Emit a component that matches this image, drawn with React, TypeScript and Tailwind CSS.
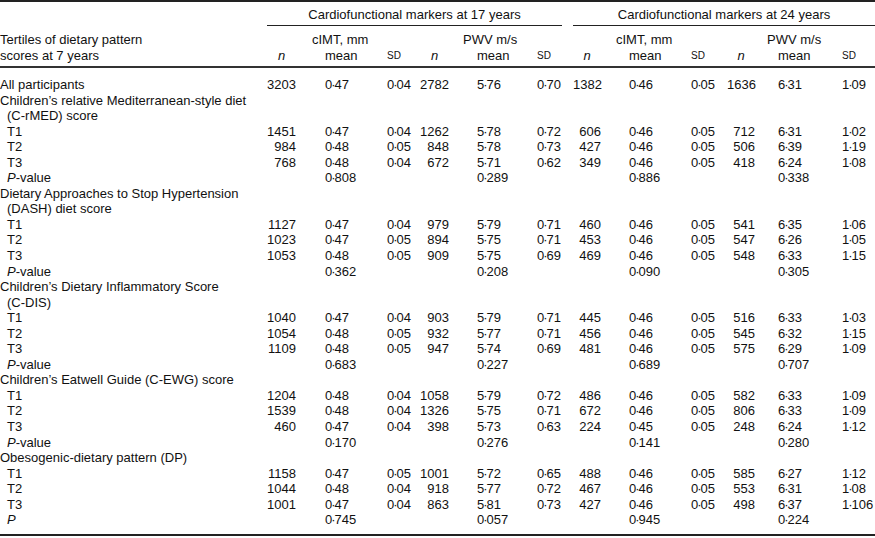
import React from "react";

type Row =
  | { kind: "head"; label: string; indent?: boolean }
  | { kind: "data"; label: string; indent?: boolean; v: string[] }
  | { kind: "p"; label: "P-value" | "P"; v: string[] };

const rows: Row[] = [
  { kind: "data", label: "All participants", v: ["3203", "0·47", "0·04", "2782", "5·76", "0·70", "1382", "0·46", "0·05", "1636", "6·31", "1·09"] },
  { kind: "head", label: "Children’s relative Mediterranean-style diet" },
  { kind: "head", label: "(C-rMED) score", indent: true },
  { kind: "data", label: "T1", indent: true, v: ["1451", "0·47", "0·04", "1262", "5·78", "0·72", "606", "0·46", "0·05", "712", "6·31", "1·02"] },
  { kind: "data", label: "T2", indent: true, v: ["984", "0·48", "0·05", "848", "5·78", "0·73", "427", "0·46", "0·05", "506", "6·39", "1·19"] },
  { kind: "data", label: "T3", indent: true, v: ["768", "0·48", "0·04", "672", "5·71", "0·62", "349", "0·46", "0·05", "418", "6·24", "1·08"] },
  { kind: "p", label: "P-value", v: ["0·808", "0·289", "0·886", "0·338"] },
  { kind: "head", label: "Dietary Approaches to Stop Hypertension" },
  { kind: "head", label: "(DASH) diet score", indent: true },
  { kind: "data", label: "T1", indent: true, v: ["1127", "0·47", "0·04", "979", "5·79", "0·71", "460", "0·46", "0·05", "541", "6·35", "1·06"] },
  { kind: "data", label: "T2", indent: true, v: ["1023", "0·47", "0·05", "894", "5·75", "0·71", "453", "0·46", "0·05", "547", "6·26", "1·05"] },
  { kind: "data", label: "T3", indent: true, v: ["1053", "0·48", "0·05", "909", "5·75", "0·69", "469", "0·46", "0·05", "548", "6·33", "1·15"] },
  { kind: "p", label: "P-value", v: ["0·362", "0·208", "0·090", "0·305"] },
  { kind: "head", label: "Children’s Dietary Inflammatory Score" },
  { kind: "head", label: "(C-DIS)", indent: true },
  { kind: "data", label: "T1", indent: true, v: ["1040", "0·47", "0·04", "903", "5·79", "0·71", "445", "0·46", "0·05", "516", "6·33", "1·03"] },
  { kind: "data", label: "T2", indent: true, v: ["1054", "0·48", "0·05", "932", "5·77", "0·71", "456", "0·46", "0·05", "545", "6·32", "1·15"] },
  { kind: "data", label: "T3", indent: true, v: ["1109", "0·48", "0·05", "947", "5·74", "0·69", "481", "0·46", "0·05", "575", "6·29", "1·09"] },
  { kind: "p", label: "P-value", v: ["0·683", "0·227", "0·689", "0·707"] },
  { kind: "head", label: "Children’s Eatwell Guide (C-EWG) score" },
  { kind: "data", label: "T1", indent: true, v: ["1204", "0·48", "0·04", "1058", "5·79", "0·72", "486", "0·46", "0·05", "582", "6·33", "1·09"] },
  { kind: "data", label: "T2", indent: true, v: ["1539", "0·48", "0·04", "1326", "5·75", "0·71", "672", "0·46", "0·05", "806", "6·33", "1·09"] },
  { kind: "data", label: "T3", indent: true, v: ["460", "0·47", "0·04", "398", "5·73", "0·63", "224", "0·45", "0·05", "248", "6·24", "1·12"] },
  { kind: "p", label: "P-value", v: ["0·170", "0·276", "0·141", "0·280"] },
  { kind: "head", label: "Obesogenic-dietary pattern (DP)" },
  { kind: "data", label: "T1", indent: true, v: ["1158", "0·47", "0·05", "1001", "5·72", "0·65", "488", "0·46", "0·05", "585", "6·27", "1·12"] },
  { kind: "data", label: "T2", indent: true, v: ["1044", "0·48", "0·04", "918", "5·77", "0·72", "467", "0·46", "0·05", "553", "6·31", "1·08"] },
  { kind: "data", label: "T3", indent: true, v: ["1001", "0·47", "0·04", "863", "5·81", "0·73", "427", "0·46", "0·05", "498", "6·37", "1·106"] },
  { kind: "p", label: "P", v: ["0·745", "0·057", "0·945", "0·224"] },
];

// n right-aligned, mean/SD left-aligned
const colCls = [
  "text-right",
  "pl-[29px]",
  "",
  "text-right",
  "pl-[28px]",
  "",
  "text-right",
  "pl-[28px]",
  "",
  "text-right",
  "pl-[23px]",
  "",
];

const grid =
  "grid grid-cols-[267px_29px_91px_33px_29px_88px_36px_28px_90px_36px_28px_87px_33px]";

// the decimal point is a tight middle dot
function Num({ s }: { s: string }) {
  const [a, b] = s.split("·");
  if (b === undefined) return <>{s}</>;
  return (
    <>
      {a}
      <span className="mx-[-1px]">·</span>
      {b}
    </>
  );
}

function Label({ row }: { row: Row }) {
  if (row.kind === "p") {
    return (
      <div className="pl-[7px] whitespace-nowrap">
        <i>P</i>
        {row.label === "P-value" ? "-value" : ""}
      </div>
    );
  }
  return (
    <div className={`whitespace-nowrap ${row.indent ? "pl-[7px]" : ""}`}>{row.label}</div>
  );
}

function SubHead({ first }: { first: boolean }) {
  return (
    <>
      <div className="text-center italic">n</div>
      <div className={first ? "pl-[29px]" : "pl-[28px]"}>mean</div>
      <div className="text-[10px]">SD</div>
      <div className="text-center italic">n</div>
      <div className={first ? "pl-[28px]" : "pl-[23px]"}>mean</div>
      <div className="text-[10px]">SD</div>
    </>
  );
}

export default function App() {
  return (
    <div
      className="w-[875px] h-[538px] bg-white text-[#111] text-[13px]"
      style={{ fontFamily: '"Liberation Sans", Arial, sans-serif' }}
    >
      <div className="border-t-2 border-[#222]">
        {/* Group headers */}
        <div className={`${grid} h-[24px]`}>
          <div />
          <div className="col-span-6 mr-[11px] border-b border-[#222] pt-[3px] leading-[20px] text-center whitespace-nowrap">
            Cardiofunctional markers at 17 years
          </div>
          <div className="col-span-6 border-b border-[#222] pt-[3px] leading-[20px] text-center whitespace-nowrap">
            Cardiofunctional markers at 24 years
          </div>
        </div>

        {/* Sub headers */}
        <div className={`${grid} pt-[6px] pb-[2px] leading-[16px] border-b-2 border-[#333] items-center`}>
          <div className="whitespace-nowrap">Tertiles of dietary pattern</div>
          <div />
          <div className="pl-[16px] whitespace-nowrap">cIMT, mm</div>
          <div />
          <div />
          <div className="pl-[14px] whitespace-nowrap">PWV m/s</div>
          <div />
          <div />
          <div className="pl-[15px] whitespace-nowrap">cIMT, mm</div>
          <div />
          <div />
          <div className="pl-[12px] whitespace-nowrap">PWV m/s</div>
          <div />

          <div className="whitespace-nowrap">scores at 7 years</div>
          <SubHead first />
          <SubHead first={false} />
        </div>

        {/* Body */}
        <div className="pt-[9px] pb-[6px] border-b-2 border-[#222]">
          {rows.map((row, i) => (
            <div key={i} className={`${grid} h-[15.55px] leading-[15.55px] whitespace-nowrap`}>
              <Label row={row} />
              {row.kind === "data" &&
                row.v.map((val, j) => (
                  <div key={j} className={colCls[j]}>
                    <Num s={val} />
                  </div>
                ))}
              {row.kind === "p" &&
                row.v.map((val, j) => (
                  <React.Fragment key={j}>
                    <div />
                    <div className={colCls[j * 3 + 1]}>
                      <Num s={val} />
                    </div>
                    <div />
                  </React.Fragment>
                ))}
            </div>
          ))}
        </div>
      </div>
    </div>
  );
}
